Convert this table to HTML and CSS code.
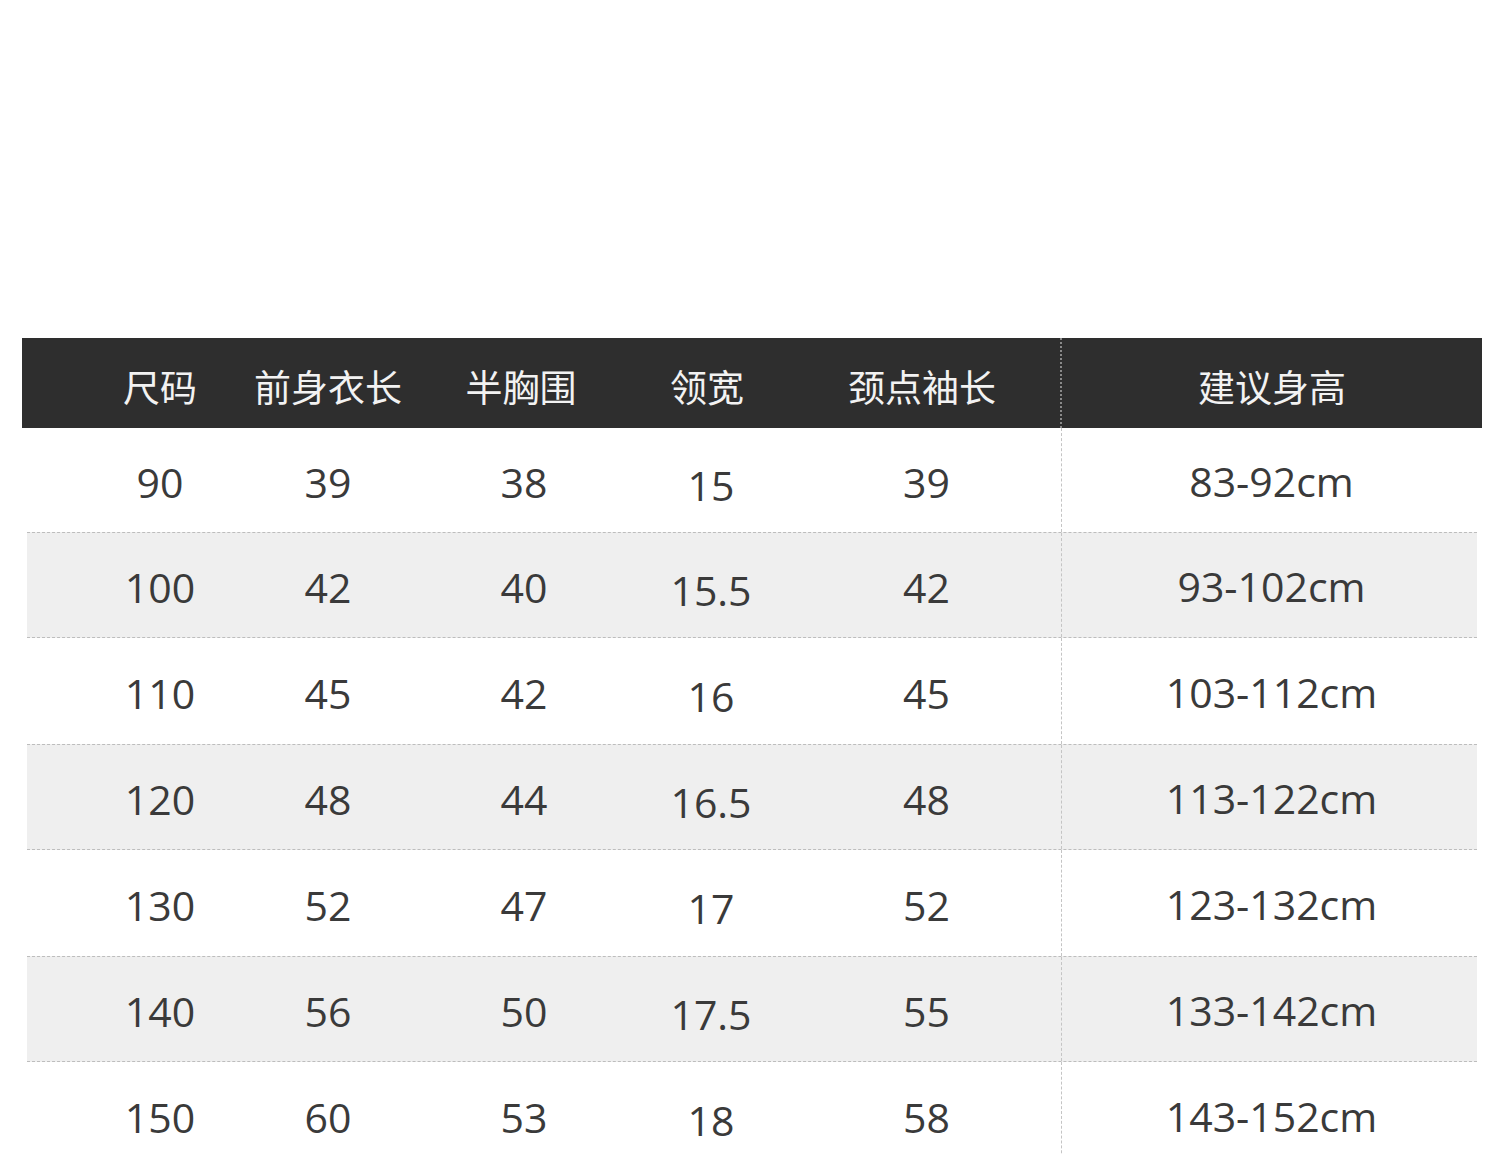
FILE: index.html
```html
<!DOCTYPE html>
<html lang="zh">
<head>
<meta charset="utf-8">
<title>尺码表</title>
<link rel="stylesheet" href="styles.css">
</head>
<body>
<div class="page">
  <div class="top-space"></div>
  <div class="size-table">
    <div class="row head">
      <div class="cell">尺码</div>
      <div class="cell">前身衣长</div>
      <div class="cell c3">半胸围</div>
      <div class="cell c4">领宽</div>
      <div class="cell c5">颈点袖长</div>
      <div class="cell last">建议身高</div>
    </div>
    <div class="row data first">
      <div class="cell">90</div><div class="cell">39</div><div class="cell">38</div><div class="cell c4">15</div><div class="cell c5">39</div><div class="cell last">83-92cm</div>
    </div>
    <div class="row data alt">
      <div class="cell">100</div><div class="cell">42</div><div class="cell">40</div><div class="cell c4">15.5</div><div class="cell c5">42</div><div class="cell last">93-102cm</div>
    </div>
    <div class="row data">
      <div class="cell">110</div><div class="cell">45</div><div class="cell">42</div><div class="cell c4">16</div><div class="cell c5">45</div><div class="cell last">103-112cm</div>
    </div>
    <div class="row data alt">
      <div class="cell">120</div><div class="cell">48</div><div class="cell">44</div><div class="cell c4">16.5</div><div class="cell c5">48</div><div class="cell last">113-122cm</div>
    </div>
    <div class="row data">
      <div class="cell">130</div><div class="cell">52</div><div class="cell">47</div><div class="cell c4">17</div><div class="cell c5">52</div><div class="cell last">123-132cm</div>
    </div>
    <div class="row data alt">
      <div class="cell">140</div><div class="cell">56</div><div class="cell">50</div><div class="cell c4">17.5</div><div class="cell c5">55</div><div class="cell last">133-142cm</div>
    </div>
    <div class="row data">
      <div class="cell">150</div><div class="cell">60</div><div class="cell">53</div><div class="cell c4">18</div><div class="cell c5">58</div><div class="cell last">143-152cm</div>
    </div>
  </div>
</div>
</body>
</html>
```
FILE: styles.css
```css
html, body {
  margin: 0;
  padding: 0;
  background: #ffffff;
}
.page {
  width: 1500px;
  height: 1154px;
  overflow: hidden;
}
.top-space {
  height: 338px;
}
.size-table {
  margin: 0 18px 0 22px;
  width: 1460px;
}
.row {
  display: grid;
  grid-template-columns: 168px 168px 224px 150px 275px 1fr;
  align-items: stretch;
  box-sizing: border-box;
}
.cell {
  display: flex;
  align-items: center;
  justify-content: center;
  white-space: nowrap;
}
.head {
  height: 90px;
  padding-left: 54px;
  background: #2e2e2e;
  color: #f2f2f2;
  font-family: "Noto Sans CJK SC", "Noto Sans", sans-serif;
  font-size: 37px;
}
.head .cell {
  padding-top: 6px;
}
.head .c3 {
  padding-right: 6px;
}
.head .c4 {
  padding-right: 8px;
}
.head .c5 {
  padding-right: 3px;
}
.head .last {
  border-left: 2px dotted #8a8a8a;
  margin-left: -1px;
}
.data {
  height: 106px;
  margin: 0 5px;
  padding-left: 49px;
  color: #3a3a3a;
  font-family: "Open Sans", "Noto Sans", sans-serif;
  font-size: 41px;
}
.data.first {
  height: 104px;
}
.data .cell {
  padding-top: 4px;
}
.data .c4 {
  padding-top: 10px;
}
.data .c5 {
  padding-left: 6px;
}
.data .last {
  border-left: 1px dashed #c4c4c4;
  padding-left: 4px;
  padding-top: 2px;
}
.data.alt {
  background: #efefef;
  border-top: 1px dashed #bdbdbd;
  border-bottom: 1px dashed #bdbdbd;
}
```
